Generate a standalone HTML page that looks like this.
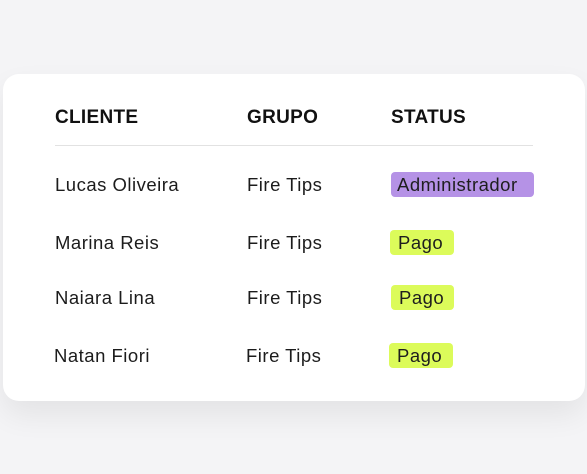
<!DOCTYPE html>
<html><head><style>
body{margin:0;width:587px;height:474px;background:#f4f4f6;font-family:"Liberation Sans",sans-serif;position:relative;overflow:hidden}
.card{position:absolute;left:3px;top:74px;width:582px;height:327px;background:#fff;border-radius:16px;box-shadow:0 14px 30px rgba(0,0,0,0.07)}
.t{position:absolute;color:#1c1c1c;font-size:18.5px;line-height:20px;white-space:nowrap;letter-spacing:0.5px}
.h{font-weight:bold;font-size:19px;color:#111;letter-spacing:0.3px}
.b{position:absolute;border-radius:4px;font-size:18.5px;line-height:25px;height:25px;color:#1e1e1e;box-sizing:border-box;padding-left:6px;letter-spacing:0.5px;white-space:nowrap}
.line{position:absolute;left:55px;top:145px;width:478px;height:1px;background:#e2e2e2}
</style></head><body>
<div class="card"></div>
<div class="t h" style="left:55px;top:108px">CLIENTE</div>
<div class="t h" style="left:247px;top:108px">GRUPO</div>
<div class="t h" style="left:391px;top:108px">STATUS</div>
<div class="line"></div>
<div class="t" style="left:55px;top:175px">Lucas Oliveira</div>
<div class="t" style="left:247px;top:175px">Fire Tips</div>
<div class="b" style="left:391px;top:172px;width:143px;background:#b592e6">Administrador</div>
<div class="t" style="left:55px;top:233px">Marina Reis</div>
<div class="t" style="left:247px;top:233px">Fire Tips</div>
<div class="b" style="left:390px;top:230px;width:64px;background:#dcfb5a;padding-left:8px">Pago</div>
<div class="t" style="left:55px;top:288px">Naiara Lina</div>
<div class="t" style="left:247px;top:288px">Fire Tips</div>
<div class="b" style="left:391px;top:285px;width:63px;background:#dcfb5a;padding-left:8px">Pago</div>
<div class="t" style="left:54px;top:346px">Natan Fiori</div>
<div class="t" style="left:246px;top:346px">Fire Tips</div>
<div class="b" style="left:389px;top:343px;width:64px;background:#dcfb5a;padding-left:8px">Pago</div>
</body></html>
